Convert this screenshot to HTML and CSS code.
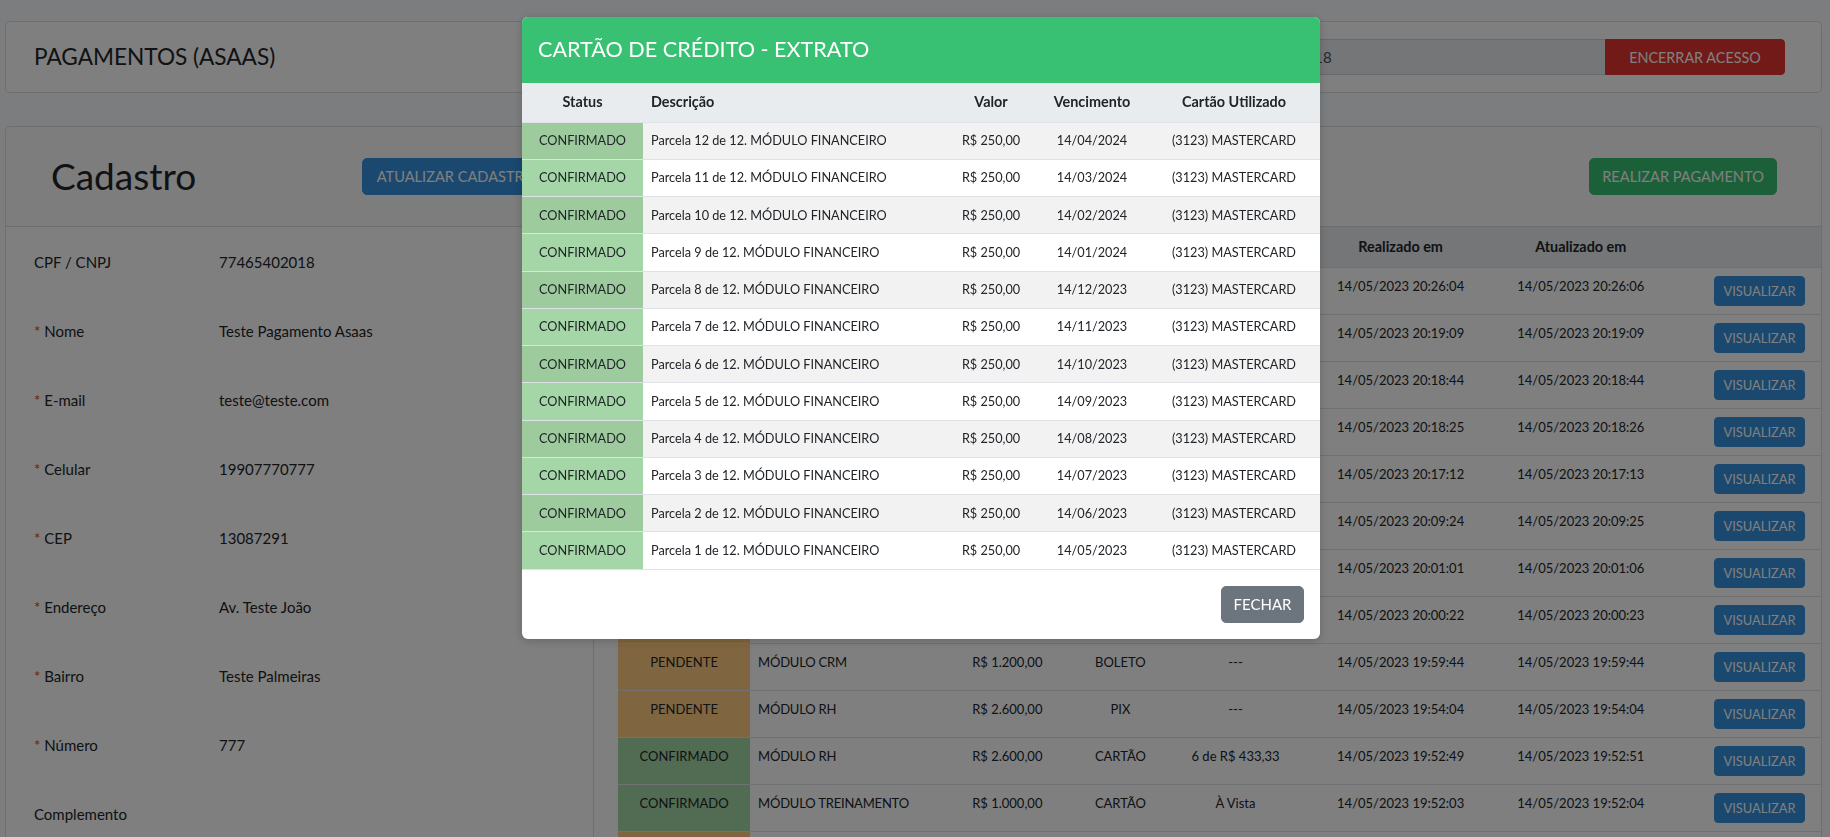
FILE: index.html
```html
<!DOCTYPE html>
<html lang="pt-BR">
<head>
<meta charset="utf-8">
<title>Pagamentos (Asaas)</title>
<link rel="stylesheet" href="styles.css">
</head>
<body>
<div class="page">
  <div class="card topbar">
    <h4 class="page-title">PAGAMENTOS (ASAAS)</h4>
    <div class="input-group">
      <div class="form-control">77465402018</div>
      <button class="btn btn-danger btn-group-end">ENCERRAR ACESSO</button>
    </div>
  </div>

  <div class="card main">
    <div class="main-header">
      <div class="hdr-left">
        <h1 class="cad-title">Cadastro</h1>
        <button class="btn btn-primary btn-hdr">ATUALIZAR CADASTRO</button>
      </div>
      <div class="hdr-right">
        <button class="btn btn-success btn-hdr">REALIZAR PAGAMENTO</button>
      </div>
    </div>
    <div class="main-body">
      <div class="form-panel">
        <div class="form-row"><span class="lbl">CPF / CNPJ</span><span class="val">77465402018</span></div>
        <div class="form-row"><span class="lbl"><span class="req">*</span> Nome</span><span class="val">Teste Pagamento Asaas</span></div>
        <div class="form-row"><span class="lbl"><span class="req">*</span> E-mail</span><span class="val">teste@teste.com</span></div>
        <div class="form-row"><span class="lbl"><span class="req">*</span> Celular</span><span class="val">19907770777</span></div>
        <div class="form-row"><span class="lbl"><span class="req">*</span> CEP</span><span class="val">13087291</span></div>
        <div class="form-row"><span class="lbl"><span class="req">*</span> Endereço</span><span class="val">Av. Teste João</span></div>
        <div class="form-row"><span class="lbl"><span class="req">*</span> Bairro</span><span class="val">Teste Palmeiras</span></div>
        <div class="form-row"><span class="lbl"><span class="req">*</span> Número</span><span class="val">777</span></div>
        <div class="form-row"><span class="lbl">Complemento</span><span class="val"></span></div>
      </div>
      <div class="table-panel">
        <table class="pay-table">
          <colgroup>
            <col class="c-status"><col class="c-desc"><col class="c-valor"><col class="c-forma"><col class="c-parc"><col class="c-real"><col class="c-atual"><col class="c-acao">
          </colgroup>
          <thead>
            <tr><th>Status</th><th class="left">Descrição</th><th>Valor</th><th>Forma</th><th>Parcelas</th><th>Realizado em</th><th>Atualizado em</th><th></th></tr>
          </thead>
          <tbody>
            <tr><td class="st ok">CONFIRMADO</td><td class="left">MÓDULO FINANCEIRO</td><td>R$ 3.000,00</td><td>CARTÃO</td><td>12 de R$ 250,00</td><td class="dt">14/05/2023 20:26:04</td><td class="dt">14/05/2023 20:26:06</td><td class="act"><button class="btn btn-primary btn-sm">VISUALIZAR</button></td></tr>
            <tr><td class="st pend">PENDENTE</td><td class="left">MÓDULO FINANCEIRO</td><td>R$ 3.000,00</td><td>BOLETO</td><td>---</td><td class="dt">14/05/2023 20:19:09</td><td class="dt">14/05/2023 20:19:09</td><td class="act"><button class="btn btn-primary btn-sm">VISUALIZAR</button></td></tr>
            <tr><td class="st pend">PENDENTE</td><td class="left">MÓDULO FINANCEIRO</td><td>R$ 3.000,00</td><td>PIX</td><td>---</td><td class="dt">14/05/2023 20:18:44</td><td class="dt">14/05/2023 20:18:44</td><td class="act"><button class="btn btn-primary btn-sm">VISUALIZAR</button></td></tr>
            <tr><td class="st ok">CONFIRMADO</td><td class="left">MÓDULO CRM</td><td>R$ 1.200,00</td><td>CARTÃO</td><td>À Vista</td><td class="dt">14/05/2023 20:18:25</td><td class="dt">14/05/2023 20:18:26</td><td class="act"><button class="btn btn-primary btn-sm">VISUALIZAR</button></td></tr>
            <tr><td class="st ok">CONFIRMADO</td><td class="left">MÓDULO CRM</td><td>R$ 1.200,00</td><td>CARTÃO</td><td>2 de R$ 600,00</td><td class="dt">14/05/2023 20:17:12</td><td class="dt">14/05/2023 20:17:13</td><td class="act"><button class="btn btn-primary btn-sm">VISUALIZAR</button></td></tr>
            <tr><td class="st pend">PENDENTE</td><td class="left">MÓDULO TREINAMENTO</td><td>R$ 1.000,00</td><td>BOLETO</td><td>---</td><td class="dt">14/05/2023 20:09:24</td><td class="dt">14/05/2023 20:09:25</td><td class="act"><button class="btn btn-primary btn-sm">VISUALIZAR</button></td></tr>
            <tr><td class="st ok">CONFIRMADO</td><td class="left">MÓDULO RH</td><td>R$ 2.600,00</td><td>CARTÃO</td><td>À Vista</td><td class="dt">14/05/2023 20:01:01</td><td class="dt">14/05/2023 20:01:06</td><td class="act"><button class="btn btn-primary btn-sm">VISUALIZAR</button></td></tr>
            <tr><td class="st pend">PENDENTE</td><td class="left">MÓDULO RH</td><td>R$ 2.600,00</td><td>PIX</td><td>---</td><td class="dt">14/05/2023 20:00:22</td><td class="dt">14/05/2023 20:00:23</td><td class="act"><button class="btn btn-primary btn-sm">VISUALIZAR</button></td></tr>
            <tr><td class="st pend">PENDENTE</td><td class="left">MÓDULO CRM</td><td>R$ 1.200,00</td><td>BOLETO</td><td>---</td><td class="dt">14/05/2023 19:59:44</td><td class="dt">14/05/2023 19:59:44</td><td class="act"><button class="btn btn-primary btn-sm">VISUALIZAR</button></td></tr>
            <tr><td class="st pend">PENDENTE</td><td class="left">MÓDULO RH</td><td>R$ 2.600,00</td><td>PIX</td><td>---</td><td class="dt">14/05/2023 19:54:04</td><td class="dt">14/05/2023 19:54:04</td><td class="act"><button class="btn btn-primary btn-sm">VISUALIZAR</button></td></tr>
            <tr><td class="st ok">CONFIRMADO</td><td class="left">MÓDULO RH</td><td>R$ 2.600,00</td><td>CARTÃO</td><td>6 de R$ 433,33</td><td class="dt">14/05/2023 19:52:49</td><td class="dt">14/05/2023 19:52:51</td><td class="act"><button class="btn btn-primary btn-sm">VISUALIZAR</button></td></tr>
            <tr><td class="st ok">CONFIRMADO</td><td class="left">MÓDULO TREINAMENTO</td><td>R$ 1.000,00</td><td>CARTÃO</td><td>À Vista</td><td class="dt">14/05/2023 19:52:03</td><td class="dt">14/05/2023 19:52:04</td><td class="act"><button class="btn btn-primary btn-sm">VISUALIZAR</button></td></tr>
            <tr><td class="st pend">PENDENTE</td><td class="left">MÓDULO TREINAMENTO</td><td>R$ 1.000,00</td><td>BOLETO</td><td>---</td><td class="dt">14/05/2023 19:50:11</td><td class="dt">14/05/2023 19:50:11</td><td class="act"><button class="btn btn-primary btn-sm">VISUALIZAR</button></td></tr>
          </tbody>
        </table>
      </div>
    </div>
  </div>
</div>

<div class="backdrop"></div>

<div class="modal">
  <div class="modal-dialog">
    <div class="modal-header">
      <h4 class="modal-title">CARTÃO DE CRÉDITO - EXTRATO</h4>
    </div>
    <table class="ext-table">
      <colgroup>
        <col class="e-status"><col class="e-desc"><col class="e-valor"><col class="e-venc"><col class="e-card">
      </colgroup>
      <thead>
        <tr><th>Status</th><th class="left">Descrição</th><th>Valor</th><th>Vencimento</th><th>Cartão Utilizado</th></tr>
      </thead>
      <tbody>
        <tr><td class="st ok">CONFIRMADO</td><td class="left">Parcela 12 de 12. MÓDULO FINANCEIRO</td><td>R$ 250,00</td><td>14/04/2024</td><td>(3123) MASTERCARD</td></tr>
        <tr><td class="st ok">CONFIRMADO</td><td class="left">Parcela 11 de 12. MÓDULO FINANCEIRO</td><td>R$ 250,00</td><td>14/03/2024</td><td>(3123) MASTERCARD</td></tr>
        <tr><td class="st ok">CONFIRMADO</td><td class="left">Parcela 10 de 12. MÓDULO FINANCEIRO</td><td>R$ 250,00</td><td>14/02/2024</td><td>(3123) MASTERCARD</td></tr>
        <tr><td class="st ok">CONFIRMADO</td><td class="left">Parcela 9 de 12. MÓDULO FINANCEIRO</td><td>R$ 250,00</td><td>14/01/2024</td><td>(3123) MASTERCARD</td></tr>
        <tr><td class="st ok">CONFIRMADO</td><td class="left">Parcela 8 de 12. MÓDULO FINANCEIRO</td><td>R$ 250,00</td><td>14/12/2023</td><td>(3123) MASTERCARD</td></tr>
        <tr><td class="st ok">CONFIRMADO</td><td class="left">Parcela 7 de 12. MÓDULO FINANCEIRO</td><td>R$ 250,00</td><td>14/11/2023</td><td>(3123) MASTERCARD</td></tr>
        <tr><td class="st ok">CONFIRMADO</td><td class="left">Parcela 6 de 12. MÓDULO FINANCEIRO</td><td>R$ 250,00</td><td>14/10/2023</td><td>(3123) MASTERCARD</td></tr>
        <tr><td class="st ok">CONFIRMADO</td><td class="left">Parcela 5 de 12. MÓDULO FINANCEIRO</td><td>R$ 250,00</td><td>14/09/2023</td><td>(3123) MASTERCARD</td></tr>
        <tr><td class="st ok">CONFIRMADO</td><td class="left">Parcela 4 de 12. MÓDULO FINANCEIRO</td><td>R$ 250,00</td><td>14/08/2023</td><td>(3123) MASTERCARD</td></tr>
        <tr><td class="st ok">CONFIRMADO</td><td class="left">Parcela 3 de 12. MÓDULO FINANCEIRO</td><td>R$ 250,00</td><td>14/07/2023</td><td>(3123) MASTERCARD</td></tr>
        <tr><td class="st ok">CONFIRMADO</td><td class="left">Parcela 2 de 12. MÓDULO FINANCEIRO</td><td>R$ 250,00</td><td>14/06/2023</td><td>(3123) MASTERCARD</td></tr>
        <tr><td class="st ok">CONFIRMADO</td><td class="left">Parcela 1 de 12. MÓDULO FINANCEIRO</td><td>R$ 250,00</td><td>14/05/2023</td><td>(3123) MASTERCARD</td></tr>
      </tbody>
    </table>
    <div class="modal-footer">
      <button class="btn btn-secondary btn-close">FECHAR</button>
    </div>
  </div>
</div>
</body>
</html>
```

FILE: styles.css
```css
* { box-sizing: border-box; }

html, body {
  margin: 0;
  height: 100%;
  overflow: hidden;
}

body {
  font-family: Lato, "Noto Sans", sans-serif;
  font-size: 14.4px;
  line-height: 1.5;
  color: #212529;
  background: #f8fafc;
}

.page {
  padding: 21px 8px 0 5px;
}

.card {
  background: #fff;
  border: 1px solid rgba(0, 0, 0, 0.125);
  border-radius: 5px;
}

/* ---------- top bar ---------- */
.topbar {
  height: 72px;
  display: flex;
  align-items: center;
  justify-content: space-between;
  padding: 0 36px 0 28px;
}

.page-title {
  margin: 0;
  font-size: 22.6px;
  font-weight: 400;
  line-height: 1.2;
}

.input-group {
  display: flex;
  height: 36px;
  width: 562px;
}

.form-control {
  flex: 1;
  background: #e9ecef;
  border: 1px solid #ced4da;
  border-right: 0;
  border-radius: 4px 0 0 4px;
  padding: 0 12px;
  font-size: 15px;
  line-height: 34px;
  color: #495057;
}

.btn {
  font-family: inherit;
  border: 1px solid transparent;
  border-radius: 5px;
  color: #fff;
  text-align: center;
  cursor: pointer;
  font-weight: 400;
}

.btn-danger { background: #e3342f; border-color: #e3342f; }
.btn-primary { background: #3490dc; border-color: #3490dc; }
.btn-success { background: #38c172; border-color: #38c172; }
.btn-secondary { background: #6c757d; border-color: #6c757d; }

.btn-group-end {
  width: 180px;
  height: 36px;
  border-radius: 0 4px 4px 0;
  font-size: 14.4px;
  padding: 0;
}

/* ---------- main card ---------- */
.main {
  margin-top: 33px;
  height: 760px;
  overflow: hidden;
  border-bottom: 0;
  border-radius: 5px 5px 0 0;
}

.main-header {
  height: 100px;
  display: grid;
  grid-template-columns: 588px 1fr;
  border-bottom: 1px solid rgba(0, 0, 0, 0.125);
  background: rgba(0, 0, 0, 0.015);
}

.hdr-left {
  display: flex;
  align-items: center;
  justify-content: space-between;
  padding: 0 44px 0 45px;
}

.hdr-right {
  display: flex;
  align-items: center;
  justify-content: flex-end;
  padding-right: 44px;
}

.cad-title {
  margin: 0;
  font-size: 37px;
  font-weight: 400;
  line-height: 1.2;
}

.btn-hdr {
  width: 188px;
  height: 37px;
  font-size: 14.6px;
  padding: 0;
}

.main-body {
  display: grid;
  grid-template-columns: 588px 1fr;
  align-items: start;
}

.form-panel {
  border-right: 1px solid rgba(0, 0, 0, 0.125);
  padding: 1px 0 0 28px;
  height: 700px;
}

.form-row {
  display: flex;
  align-items: center;
  height: 69px;
  font-size: 15px;
}

.lbl {
  width: 185px;
  flex: none;
}

.req {
  color: #e3342f;
}

.table-panel {
  padding-left: 24px;
}

table {
  border-collapse: collapse;
  table-layout: fixed;
  width: 100%;
}

th, td {
  text-align: center;
  vertical-align: top;
}

th.left, td.left {
  text-align: left;
}

.pay-table th {
  height: 40px;
  vertical-align: middle;
  font-weight: 700;
  background: #e9ecef;
  border-bottom: 1px solid #dee2e6;
  padding: 0 8px;
  white-space: nowrap;
}

.pay-table td {
  height: 47px;
  padding: 8px 8px;
  border-top: 1px solid #dee2e6;
  font-size: 13px;
  line-height: 21px;
  white-space: nowrap;
}

.pay-table td.left { letter-spacing: -0.2px; }

.pay-table td.dt { padding-left: 0; padding-right: 0; }

.pay-table td.act {
  text-align: right;
  padding: 8px 16px 8px 0;
}

.c-status { width: 132px; }
.c-desc { width: 207px; }
.c-valor { width: 100px; }
.c-forma { width: 126px; }
.c-parc { width: 104px; }
.c-real { width: 226px; }
.c-atual { width: 134px; }
.c-acao { width: 173px; }

.st.ok { background-color: #a5d6a7; }
.st.pend { background-color: #ffcc80; }

.btn-sm {
  width: 91px;
  height: 30px;
  padding: 0;
  font-size: 12.9px;
  border-radius: 4px;
  vertical-align: top;
}

/* ---------- modal ---------- */
.backdrop {
  position: fixed;
  inset: 0;
  background: rgba(0, 0, 0, 0.5);
}

.modal {
  position: fixed;
  inset: 0;
  padding: 17px 0 0 522px;
}

.modal-dialog {
  width: 798px;
  background: #fff;
  border-radius: 6px;
  overflow: hidden;
  box-shadow: 0 2px 10px rgba(0, 0, 0, 0.2);
}

.modal-header {
  height: 66px;
  background: #38c172;
  display: flex;
  align-items: center;
  padding: 0 16px;
}

.modal-title {
  margin: 0;
  color: #fff;
  font-size: 21.6px;
  font-weight: 400;
  line-height: 1.2;
}

.ext-table th {
  height: 39px;
  background: #e9ecef;
  font-weight: 700;
  vertical-align: middle;
  padding: 0 8px;
  white-space: nowrap;
}

.ext-table td {
  height: 37.25px;
  padding: 0 8px;
  vertical-align: middle;
  border-top: 1px solid #dee2e6;
  font-size: 12.7px;
  white-space: nowrap;
  background-color: #fff;
}

.ext-table td.st.ok { background-color: #a5d6a7; }

.ext-table tbody tr:nth-child(odd) td {
  background-image: linear-gradient(rgba(0, 0, 0, 0.05), rgba(0, 0, 0, 0.05));
}

.ext-table tbody tr:last-child td {
  border-bottom: 1px solid #dee2e6;
}

.e-status { width: 121px; }
.e-desc { width: 303px; }
.e-valor { width: 90px; }
.e-venc { width: 112px; }
.e-card { width: 172px; }

.modal-footer {
  height: 69px;
  display: flex;
  align-items: center;
  justify-content: flex-end;
  padding: 0 16px;
}

.btn-close {
  width: 83px;
  height: 37px;
  font-size: 15px;
  padding: 0;
}
```
